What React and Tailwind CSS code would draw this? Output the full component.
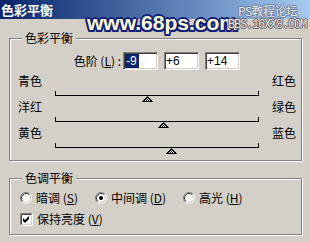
import React from 'react';

// value -> "+6" / "-9"
const fmt = (v) => (v > 0 ? `+${v}` : `${v}`);

function Group({ title, className, children }) {
  return (
    <div className={`relative border border-[#808080] shadow-[inset_1px_1px_0_#fff,1px_1px_0_#fff] ${className}`}>
      <span className="absolute left-[12px] top-[-8px] bg-[#d4d0c8] px-[3px] leading-[14px]">{title}</span>
      {children}
    </div>
  );
}

function Field({ value, selected }) {
  return (
    <div className="h-[18px] w-[35px] border border-t-[#808080] border-l-[#808080] border-b-white border-r-white bg-white pl-[1px] font-['Liberation_Sans',sans-serif] text-[12px] leading-[16px] shadow-[inset_1px_1px_0_#404040,inset_-1px_-1px_0_#d4d0c8]">
      <span className={selected ? 'bg-[#0a246a] pl-[1px] pr-[2px] text-white' : ''}>{value}</span>
    </div>
  );
}

function Thumb({ style }) {
  return (
    <svg className="absolute top-[5px]" style={style} width="11" height="6" viewBox="0 0 11 6">
      <defs>
        <pattern id="dither" width="2" height="2" patternUnits="userSpaceOnUse">
          <rect width="2" height="2" fill="#fff" />
          <rect width="1" height="1" fill="#000" />
          <rect x="1" y="1" width="1" height="1" fill="#000" />
        </pattern>
      </defs>
      <polygon points="5.5,0.5 10.5,5.5 0.5,5.5" fill="url(#dither)" stroke="#000" strokeWidth="1" />
    </svg>
  );
}

function Slider({ left, right, value }) {
  // track is 204px wide, range -100..100
  const x = ((value + 100) / 200) * 203;
  return (
    <div className="h-[26px]">
      <div className="flex h-[17px] justify-between pl-[8px] pr-[5px] leading-[14px]">
        <span>{left}</span>
        <span>{right}</span>
      </div>
      <div className="relative ml-[45px] h-[5px] w-[204px] border-x border-b border-black">
        <Thumb style={{ left: x - 6 }} />
      </div>
    </div>
  );
}

function Radio({ checked }) {
  return (
    <svg width="12" height="12" viewBox="0 0 12 12" className="shrink-0">
      <circle cx="6" cy="6" r="4.5" fill="#fff" />
      <path d="M2.11 9.89 A5.5 5.5 0 0 1 9.89 2.11" fill="none" stroke="#808080" />
      <path d="M9.89 2.11 A5.5 5.5 0 0 1 2.11 9.89" fill="none" stroke="#fff" />
      <path d="M2.82 9.18 A4.5 4.5 0 0 1 9.18 2.82" fill="none" stroke="#404040" />
      <path d="M9.18 2.82 A4.5 4.5 0 0 1 2.82 9.18" fill="none" stroke="#d4d0c8" />
      {checked && <circle cx="6" cy="6" r="2" fill="#000" />}
    </svg>
  );
}

function Option({ className, checked, children }) {
  return (
    <div className={`flex items-center gap-[4px] leading-[14px] ${className}`}>
      <Radio checked={checked} />
      <span>{children}</span>
    </div>
  );
}

export default function App() {
  const levels = [-9, 6, 14];
  return (
    <div className="relative h-[242px] w-[310px] overflow-hidden bg-[#d4d0c8] font-['Noto_Sans_CJK_SC',sans-serif] text-[12px] text-black">
      {/* title bar */}
      <div className="h-[19px] bg-linear-to-r from-[#0a246a] to-[#a6caf0] pl-[1px] text-[13px] font-bold leading-[19px] text-white">
        色彩平衡
      </div>

      <div className="flex flex-col pl-[9px] pr-[8px]">
        <Group title="色彩平衡" className="mt-[19px] pt-[13px] pb-[8px]">
          <div className="flex h-[18px] items-center">
            <div className="w-[113px] pr-[2px] text-right leading-[14px]">
              色阶 (<span className="underline">L</span>) :
            </div>
            <div className="flex gap-[6px]">
              {levels.map((v, i) => (
                <Field key={i} value={fmt(v)} selected={i === 0} />
              ))}
            </div>
          </div>
          <div className="mt-[4px]">
            <Slider left="青色" right="红色" value={levels[0]} />
            <Slider left="洋红" right="绿色" value={levels[1]} />
            <Slider left="黄色" right="蓝色" value={levels[2]} />
          </div>
        </Group>

        <Group title="色调平衡" className="mt-[17px] pt-[11px] pb-[7px]">
          <div className="flex h-[16px] items-center pl-[10px]">
            <Option className="w-[75px]">暗调 (<span className="underline">S</span>)</Option>
            <Option className="w-[88px]" checked>中间调 (<span className="underline">D</span>)</Option>
            <Option>高光 (<span className="underline">H</span>)</Option>
          </div>
          <div className="mt-[5px] flex h-[16px] items-center gap-[4px] pl-[10px] leading-[14px]">
            <svg width="13" height="13" viewBox="0 0 13 13" className="shrink-0">
              <rect x="0" y="0" width="13" height="13" fill="#fff" />
              <path d="M0.5 12.5 V0.5 H12.5" fill="none" stroke="#808080" />
              <path d="M12.5 0.5 V12.5 H0.5" fill="none" stroke="#fff" />
              <path d="M1.5 11.5 V1.5 H11.5" fill="none" stroke="#404040" />
              <path d="M11.5 1.5 V11.5 H1.5" fill="none" stroke="#d4d0c8" />
              <path d="M3 5 l2 2 l4 -4 v3 l-4 4 l-2 -2 z" fill="#000" />
            </svg>
            <span>保持亮度 (<span className="underline">V</span>)</span>
          </div>
        </Group>
      </div>

      {/* watermarks */}
      <div className="absolute left-[87px] top-[12px] font-['Liberation_Sans',sans-serif] text-[21px] font-bold leading-[21px] text-[#fdfbd8] [text-shadow:2px_0_0_#14207a,-2px_0_0_#14207a,0_2px_0_#14207a,0_-2px_0_#14207a,1.5px_1.5px_0_#14207a,-1.5px_1.5px_0_#14207a,1.5px_-1.5px_0_#14207a,-1.5px_-1.5px_0_#14207a]">
        www.68ps.com
      </div>
      <div className="absolute left-[238px] top-[4px] text-[12px] leading-[14px] tracking-[-0.5px] text-[#e8e8e8] [text-shadow:1px_0_0_#6a7a9a,-1px_0_0_#6a7a9a,0_1px_0_#6a7a9a,0_-1px_0_#6a7a9a]">
        PS教程论坛
      </div>
      <div className="absolute left-[228px] top-[19px] font-['Liberation_Mono',monospace] text-[12px] leading-[12px] tracking-[-1.2px] text-[#e4e4e4] [text-shadow:1px_0_0_#606060,-1px_0_0_#606060,0_1px_0_#606060,0_-1px_0_#606060]">
        BBS.16XX8.COM
      </div>
    </div>
  );
}
